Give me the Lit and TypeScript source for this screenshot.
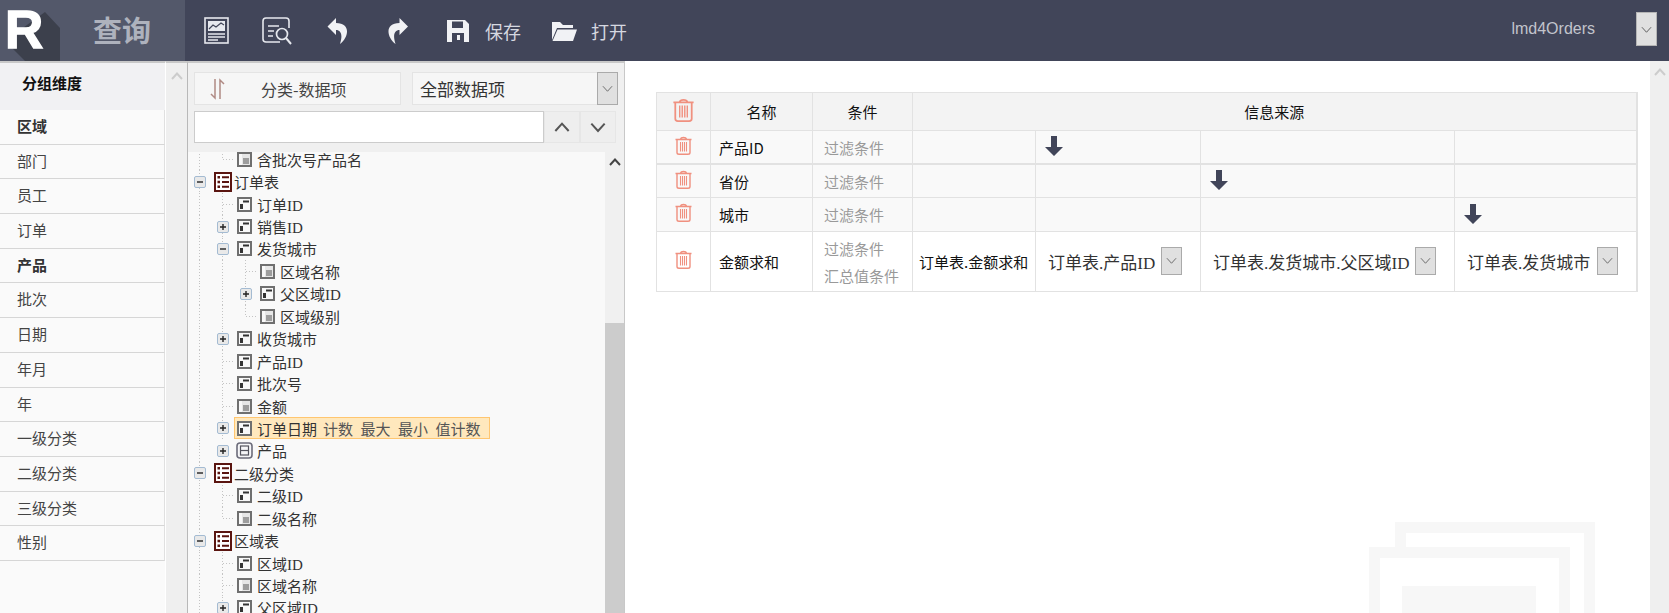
import { LitElement, css, html, svg } from 'lit';
import { customElement } from 'lit/decorators.js';

type TreeIcon = 'field' | 'measure' | 'table' | 'dim';
interface TreeRow {
  level: number;
  exp?: '+' | '-';
  end?: boolean;
  icon: TreeIcon;
  text: string;
  extras?: string[];
}

const GROUPS: [string, boolean][] = [
  ['区域', true], ['部门', false], ['员工', false], ['订单', false], ['产品', true], ['批次', false],
  ['日期', false], ['年月', false], ['年', false], ['一级分类', false], ['二级分类', false], ['三级分类', false], ['性别', false],
];

const TREE: TreeRow[] = [
  { level: 1, end: true, icon: 'measure', text: '含批次号产品名' },
  { level: 0, exp: '-', icon: 'table', text: '订单表' },
  { level: 1, icon: 'field', text: '订单ID' },
  { level: 1, exp: '+', icon: 'field', text: '销售ID' },
  { level: 1, exp: '-', icon: 'field', text: '发货城市' },
  { level: 2, icon: 'measure', text: '区域名称' },
  { level: 2, exp: '+', icon: 'field', text: '父区域ID' },
  { level: 2, end: true, icon: 'measure', text: '区域级别' },
  { level: 1, exp: '+', icon: 'field', text: '收货城市' },
  { level: 1, icon: 'field', text: '产品ID' },
  { level: 1, icon: 'field', text: '批次号' },
  { level: 1, icon: 'measure', text: '金额' },
  { level: 1, exp: '+', icon: 'field', text: '订单日期', extras: ['计数', '最大', '最小', '值计数'] },
  { level: 1, exp: '+', end: true, icon: 'dim', text: '产品' },
  { level: 0, exp: '-', icon: 'table', text: '二级分类' },
  { level: 1, icon: 'field', text: '二级ID' },
  { level: 1, end: true, icon: 'measure', text: '二级名称' },
  { level: 0, exp: '-', icon: 'table', text: '区域表' },
  { level: 1, icon: 'field', text: '区域ID' },
  { level: 1, icon: 'measure', text: '区域名称' },
  { level: 1, exp: '+', icon: 'field', text: '父区域ID' },
];

const chevron = (dir: 'up' | 'down', size: number, color: string, width = 1.5) => html`
  <svg width=${size} height=${size} viewBox="0 0 12 12">
    <path d=${dir === 'up' ? 'M1 9 L6 3.5 L11 9' : 'M1 3.5 L6 9 L11 3.5'} fill="none" stroke=${color} stroke-width=${width} />
  </svg>`;

const trash = (w: number, h: number) => html`
  <svg class="trash" width=${w} height=${h} viewBox="0 0 17 19">
    <g fill="none" stroke="#f0907f" stroke-width="1.4">
      <path d="M0.5 3.5 H16.5 M5.5 3 C6 1 11 1 11.5 3" />
      <path d="M2 4 V16.5 C2 17.6 2.8 18.3 4 18.3 H13 C14.2 18.3 15 17.6 15 16.5 V4" />
      <path d="M5.5 6 V15.5 M7.5 6 V15.5 M9.5 6 V15.5 M11.5 6 V15.5" stroke-width="1.1" />
    </g>
  </svg>`;

const downArrow = html`
  <svg class="down" width="18" height="20" viewBox="0 0 18 20">
    <path d="M6 0 H12 V11 H18 L9 20 L0 11 H6 Z" fill="#414559" />
  </svg>`;

const treeIcon = (kind: TreeIcon) => {
  if (kind === 'table') {
    return html`<svg class="ti-table" width="18" height="20" viewBox="0 0 18 20">
      <rect x="1" y="1" width="16" height="18" fill="#fff" stroke="#5a1510" stroke-width="2" />
      <path d="M3.5 4 H6 V6.5 H3.5 Z M3.5 8.8 H6 V11.3 H3.5 Z M3.5 13.6 H6 V16 H3.5 Z M8 4.2 H15 V6.2 H8 Z M8 9 H15 V11 H8 Z M8 13.8 H15 V15.8 H8 Z" fill="#5a1510" />
    </svg>`;
  }
  if (kind === 'dim') {
    return html`<svg class="ti-dim" width="17" height="17" viewBox="0 0 17 17">
      <rect x="1" y="1" width="15" height="15" rx="3" fill="#f6f6f8" stroke="#6c6c7a" stroke-width="1.6" />
      <rect x="4.5" y="4" width="8" height="9" fill="none" stroke="#55555f" stroke-width="1.2" />
      <path d="M4.5 8.5 H12.5" stroke="#55555f" stroke-width="1.2" />
    </svg>`;
  }
  const inner = kind === 'field'
    ? svg`<path d="M6 3.5 H12 V5.5 H6 Z M3 7 H6 V12 H3 Z" fill="#333" />`
    : svg`<rect x="5" y="2" width="8" height="11" fill="#e6e6e6" /><path d="M6 7 H12 M6 9 H12 M6 11 H12" stroke="#555" stroke-width="1" />`;
  return html`<svg class="ti" width="15" height="15" viewBox="0 0 15 15">
    <rect x="1" y="1" width="13" height="13" fill="#f8f8f8" stroke="#6f6f6f" stroke-width="2" />
    ${inner}
  </svg>`;
};

const expander = (sign: '+' | '-') => html`
  <svg class="exp" width="12" height="12" viewBox="0 0 12 12">
    <rect x="0.5" y="0.5" width="11" height="11" rx="1.5" fill="#e9e9e9" stroke="#a4bbd2" />
    <path d=${sign === '+' ? 'M3 6 H9 M6 3 V9' : 'M3 6 H9'} stroke="#222" stroke-width="1.4" />
  </svg>`;

const TOOL = '#e6e8ee';

@customElement('app-root')
export class AppRoot extends LitElement {
  static styles = css`
    :host {
      display: block;
      width: 1669px;
      height: 613px;
      overflow: hidden;
      background: #fff;
      font-family: "Noto Sans CJK SC", "Liberation Sans", sans-serif;
      font-size: 15px;
      color: #333;
    }
    svg { display: block; flex: none; }

    /* header */
    .top { display: flex; height: 61px; background: #414559; }
    .brand { display: flex; width: 185px; height: 61px; background: #53586a; }
    .brand .logo-text {
      font-family: "Liberation Sans", sans-serif;
      font-weight: 700;
      font-size: 53px;
      fill: #fff;
      stroke: #fff;
      stroke-width: 1.4px;
    }
    .brand .title {
      margin-left: 31px;
      line-height: 58px;
      font-size: 29px;
      font-weight: 700;
      color: #aeb2bd;
      white-space: nowrap;
    }
    .tools {
      display: grid;
      grid-template-columns: 58px 65px 59px 61px 104px auto;
      align-items: center;
      padding-left: 19px;
      flex: 1;
    }
    .tool { display: flex; align-items: center; color: #d6d8e0; font-size: 18px; }
    .tool span { white-space: nowrap; }
    .save span { margin-left: 16px; }
    .open span { margin-left: 14px; }
    .model {
      margin: 21px 41px 0 0;
      font: 16px/1 "Liberation Sans", sans-serif;
      color: #c2c4cc;
    }
    .model-btn {
      display: flex;
      align-items: center;
      justify-content: center;
      width: 21px;
      height: 34px;
      margin: 12px 12px 0 0;
      box-sizing: border-box;
      background: #e0e0e0;
      border: 1px solid #b5b5b5;
    }

    /* body */
    .body { display: flex; height: 552px; }

    .groups {
      width: 166px;
      flex: none;
      background: #fafafa;
      border-top: 2px solid #c8c8c8;
      border-right: 1px solid #fff;
      box-sizing: border-box;
    }
    .groups h2 {
      margin: 0;
      height: 47px;
      padding-left: 22px;
      line-height: 40px;
      font-size: 15px;
      font-weight: 700;
      color: #111;
      background: #f1f1f3;
    }
    .group {
      height: 34.7px;
      box-sizing: border-box;
      padding-left: 17px;
      line-height: 31px;
      border-bottom: 1px solid #d6d6d6;
      border-right: 1px solid #e0e0e0;
      color: #444;
    }
    .group.strong { font-weight: 700; color: #333; }

    .bar {
      display: flex;
      justify-content: center;
      flex: none;
      box-sizing: border-box;
      background: #efefef;
      padding-top: 7px;
    }
    .bar-left { width: 21px; border-top: 2px solid #c8c8c8; }
    .bar-main { width: 19px; padding-top: 5px; }

    .middle {
      display: flex;
      flex-direction: column;
      width: 438px;
      flex: none;
      box-sizing: border-box;
      background: #f0f0f0;
      border-top: 2px solid #c8c8c8;
      border-left: 1px solid #b8b8b8;
      border-right: 1px solid #c8c8c8;
    }
    .pick {
      display: flex;
      height: 33px;
      margin: 9px 6px 0 6px;
    }
    .sort {
      display: flex;
      align-items: center;
      width: 207px;
      box-sizing: border-box;
      padding-left: 15px;
      background: #f6f6f6;
      border: 1px solid #e4e4e4;
      color: #444;
      font-size: 16px;
    }
    .sort span { margin-left: 35px; }
    .scope {
      display: flex;
      align-items: center;
      justify-content: space-between;
      width: 206px;
      box-sizing: border-box;
      margin-left: 11px;
      padding-left: 7px;
      background: #f6f6f6;
      border: 1px solid #e4e4e4;
      border-right: 0;
      font-size: 17px;
      color: #333;
    }
    .drop {
      display: flex;
      align-items: center;
      justify-content: center;
      flex: none;
      box-sizing: border-box;
      background: #e0e0e0;
      border: 1px solid #aaa;
    }
    .scope .drop { width: 21px; height: 33px; }
    .search { display: flex; height: 32px; margin: 6px 6px 0 6px; }
    .search .box {
      width: 350px;
      box-sizing: border-box;
      background: #fff;
      border: 1px solid #ccc;
    }
    .search .nav {
      display: flex;
      align-items: center;
      justify-content: center;
      width: 36px;
      box-sizing: border-box;
      background: #eee;
      border: 1px solid #e6e6e6;
    }

    .tree-wrap { display: flex; flex: 1; min-height: 0; margin-top: 9px; }
    .tree {
      flex: 1;
      overflow: hidden;
      background: #f9f9f9;
      font-family: "Liberation Serif", "Noto Sans CJK SC", serif;
    }
    .tree-inner { margin-top: -4px; }
    .row { display: flex; align-items: center; height: 22.45px; white-space: nowrap; color: #333; }
    .cell { display: flex; align-items: center; justify-content: center; width: 23px; height: 100%; flex: none; }
    .cell.v { background: repeating-linear-gradient(to bottom, #c4c4c4 0 1px, transparent 1px 3px) center / 1px 100% no-repeat; }
    .cell.elbow {
      background:
        repeating-linear-gradient(to right, #c4c4c4 0 1px, transparent 1px 3px) right center / 50% 1px no-repeat,
        repeating-linear-gradient(to bottom, #c4c4c4 0 1px, transparent 1px 3px) center top / 1px 100% no-repeat;
    }
    .cell.elbow.end {
      background:
        repeating-linear-gradient(to right, #c4c4c4 0 1px, transparent 1px 3px) right center / 50% 1px no-repeat,
        repeating-linear-gradient(to bottom, #c4c4c4 0 1px, transparent 1px 3px) center top / 1px 50% no-repeat;
    }
    .node { display: flex; align-items: center; height: 100%; padding-left: 3px; }
    .node .label { margin-left: 5px; }
    .node.t0 .label { margin-left: 2px; }
    .node.t0 { font-family: "Noto Sans CJK SC", sans-serif; }
    .node.d0 { padding-left: 2px; }
    .node.d0 .label { margin-left: 4px; }
    .node.hit {
      height: 22px;
      width: 256px;
      box-sizing: border-box;
      padding-left: 2px;
      background: #ffe8bd;
      border: 1px solid #ffc670;
    }
    .node.hit .label { margin-left: 5px; }
    .extra { margin-left: 7.5px; color: #555; }
    .node.hit .label + .extra { margin-left: 6px; }
    .tree-bar {
      display: flex;
      flex-direction: column;
      width: 19px;
      flex: none;
      background: #f0f0f0;
    }
    .tree-bar .track { display: flex; justify-content: center; height: 171px; padding-top: 4px; box-sizing: border-box; }
    .tree-bar .thumb { flex: 1; background: #ccc; }

    /* right side */
    .main {
      position: relative;
      flex: 1;
      padding: 31px 0 0 31px;
      box-sizing: border-box;
      overflow: hidden;
      background: #fff;
    }
    .watermark { position: absolute; left: 744px; top: 461px; }
    table {
      position: relative;
      border-collapse: collapse;
      table-layout: fixed;
      width: 980px;
      color: #111;
      font-size: 15px;
    }
    th, td { border: 1px solid #e2e2e2; padding: 0; font-weight: 400; }
    thead th { height: 37px; background: #f3f3f3; text-align: center; color: #111; }
    tbody tr.plain td { background: #f9f9f9; }
    tbody tr.r1 td { height: 32px; border-bottom-width: 2px; }
    tbody tr.r2 td { height: 32px; }
    tbody tr.r3 td { height: 33px; }
    tbody tr.r4 td { height: 59px; }
    th:last-child, td:last-child { border-right-width: 2px; }
    .t-icon { display: flex; justify-content: center; padding-bottom: 4px; }
    .name { padding-left: 8px; }
    .cond { padding-left: 11px; color: #999; line-height: 27px; }
    .src { padding-left: 6px; white-space: nowrap; }
    .arrow { padding-left: 9px; }
    .arrow .down { margin-bottom: 2px; }
    .sel {
      display: flex;
      align-items: center;
      justify-content: space-between;
      padding: 0 18px 1px 12px;
      font: 17px "Liberation Serif", "Noto Sans CJK SC", serif;
      color: #333;
      white-space: nowrap;
    }
    .sel .drop { width: 21px; height: 28px; margin-top: -1px; }
  `;

  private renderTop() {
    return html`
      <div class="top">
        <div class="brand">
          <svg width="62" height="61" viewBox="0 0 62 61">
            <polygon points="8,44 25,61 60,61 60,28 45,12 20,30" fill="#3c404c" />
            <text class="logo-text" x="5" y="48">R</text>
          </svg>
          <div class="title">查询</div>
        </div>
        <div class="tools">
          <div class="tool">
            <svg width="25" height="27" viewBox="0 0 25 27">
              <rect x="1" y="1" width="23" height="25" fill="none" stroke=${TOOL} stroke-width="1.6" />
              <rect x="4" y="4" width="17" height="10" fill=${TOOL} />
              <path d="M5 12 L9 8 L12 10 L17 6 L20 8" fill="none" stroke="#414559" stroke-width="1.2" />
              <path d="M4 17 H21 M4 20 H21 M4 23 H14" stroke=${TOOL} stroke-width="1.4" />
            </svg>
          </div>
          <div class="tool">
            <svg width="30" height="28" viewBox="0 0 30 28">
              <path d="M18 25 H4 C2.5 25 1 24 1 22 V4 C1 2 2.5 1 4 1 H24 C26 1 27 2 27 4 V11" fill="none" stroke=${TOOL} stroke-width="1.6" />
              <path d="M6 9 H17 M6 14 H12 M6 19 H11" stroke=${TOOL} stroke-width="1.6" />
              <circle cx="20" cy="17" r="5.5" fill="none" stroke=${TOOL} stroke-width="1.7" />
              <path d="M24 21 L29 27" stroke=${TOOL} stroke-width="2" />
            </svg>
          </div>
          <div class="tool">
            <svg width="22" height="27" viewBox="0 0 22 27">
              <path d="M9 1 L0.5 9.5 L9 18 V13 C14 13 16 18 13 27 C22 20 24 6 9 6 Z" fill="#f1f2f5" />
            </svg>
          </div>
          <div class="tool">
            <svg width="23" height="27" viewBox="0 0 22 27">
              <path d="M13 1 L21.5 9.5 L13 18 V13 C8 13 6 18 9 27 C0 20 -2 6 13 6 Z" fill="#f1f2f5" />
            </svg>
          </div>
          <div class="tool save">
            <svg width="22" height="22" viewBox="0 0 22 22">
              <path d="M0 0 H18 L22 4 V22 H0 Z" fill="#f1f2f5" />
              <rect x="5" y="1.5" width="11" height="6.5" fill="#414559" />
              <rect x="5" y="13" width="12" height="9" fill="#414559" />
              <rect x="10" y="15" width="3" height="5" fill="#f1f2f5" />
            </svg>
            <span>保存</span>
          </div>
          <div class="tool open">
            <svg width="26" height="22" viewBox="0 0 26 22">
              <path d="M1 20 V2 H9 L12 5 H22 V8 H6 Z" fill="#f1f2f5" />
              <path d="M6.5 9.5 H26 L22 21 H1.5 Z" fill="#f1f2f5" />
            </svg>
            <span>打开</span>
          </div>
        </div>
        <div class="model">lmd4Orders</div>
        <div class="model-btn">${chevron('down', 11, '#555', 1)}</div>
      </div>`;
  }

  private renderRow(r: TreeRow) {
    const guides = [];
    for (let i = 0; i < r.level; i++) guides.push(html`<div class="cell v"></div>`);
    const own = r.exp
      ? html`<div class=${r.level === 0 || !r.end ? 'cell v' : 'cell'}>${expander(r.exp)}</div>`
      : html`<div class=${r.end ? 'cell elbow end' : 'cell elbow'}></div>`;
    const nodeClass = `node ${r.level === 0 ? 't0' : ''} ${r.icon === 'dim' ? 'd0' : ''} ${r.extras ? 'hit' : ''}`;
    return html`
      <div class="row">
        ${guides}${own}
        <div class=${nodeClass}>
          ${treeIcon(r.icon)}
          <span class="label">${r.text}</span>
          ${(r.extras ?? []).map((e) => html`<span class="extra">${e}</span>`)}
        </div>
      </div>`;
  }

  private renderMiddle() {
    return html`
      <div class="middle">
        <div class="pick">
          <div class="sort">
            <svg width="16" height="22" viewBox="0 0 16 22">
              <path d="M5 1 V20 L1 16 M10 21 V2 L14 6" fill="none" stroke="#b08a84" stroke-width="1.5" />
            </svg>
            <span>分类-数据项</span>
          </div>
          <div class="scope">
            全部数据项
            <div class="drop">${chevron('down', 11, '#666', 1)}</div>
          </div>
        </div>
        <div class="search">
          <div class="box"></div>
          <div class="nav">${chevron('up', 16, '#555')}</div>
          <div class="nav">${chevron('down', 16, '#555')}</div>
        </div>
        <div class="tree-wrap">
          <div class="tree">
            <div class="tree-inner">${TREE.map((r) => this.renderRow(r))}</div>
          </div>
          <div class="tree-bar">
            <div class="track">${chevron('up', 12, '#444', 2)}</div>
            <div class="thumb"></div>
          </div>
        </div>
      </div>`;
  }

  private renderTable() {
    return html`
      <table>
        <colgroup>
          <col style="width:54px" /><col style="width:102px" /><col style="width:100px" />
          <col style="width:123px" /><col style="width:165px" /><col style="width:254px" /><col style="width:182px" />
        </colgroup>
        <thead>
          <tr>
            <th><div class="t-icon">${trash(23, 24)}</div></th>
            <th>名称</th>
            <th>条件</th>
            <th colspan="4">信息来源</th>
          </tr>
        </thead>
        <tbody>
          <tr class="plain r1">
            <td><div class="t-icon">${trash(17, 19)}</div></td>
            <td class="name">产品ID</td>
            <td class="cond">过滤条件</td>
            <td></td>
            <td class="arrow">${downArrow}</td>
            <td></td>
            <td></td>
          </tr>
          <tr class="plain r2">
            <td><div class="t-icon">${trash(17, 19)}</div></td>
            <td class="name">省份</td>
            <td class="cond">过滤条件</td>
            <td></td>
            <td></td>
            <td class="arrow">${downArrow}</td>
            <td></td>
          </tr>
          <tr class="plain r3">
            <td><div class="t-icon">${trash(17, 19)}</div></td>
            <td class="name">城市</td>
            <td class="cond">过滤条件</td>
            <td></td>
            <td></td>
            <td></td>
            <td class="arrow">${downArrow}</td>
          </tr>
          <tr class="r4">
            <td><div class="t-icon">${trash(17, 19)}</div></td>
            <td class="name">金额求和</td>
            <td class="cond">过滤条件<br />汇总值条件</td>
            <td class="src">订单表.金额求和</td>
            <td>${this.renderSel('订单表.产品ID')}</td>
            <td>${this.renderSel('订单表.发货城市.父区域ID')}</td>
            <td>${this.renderSel('订单表.发货城市')}</td>
          </tr>
        </tbody>
      </table>`;
  }

  private renderSel(text: string) {
    return html`<div class="sel"><span>${text}</span><div class="drop">${chevron('down', 11, '#666', 1)}</div></div>`;
  }

  render() {
    return html`
      ${this.renderTop()}
      <div class="body">
        <div class="groups">
          <h2>分组维度</h2>
          ${GROUPS.map(([name, strong]) => html`<div class=${strong ? 'group strong' : 'group'}>${name}</div>`)}
        </div>
        <div class="bar bar-left">${chevron('up', 12, '#ccc', 2)}</div>
        ${this.renderMiddle()}
        <div class="main">
          <svg class="watermark" width="226" height="91" viewBox="0 0 226 91">
            <g fill="none" stroke="#f7f7f7" stroke-width="11">
              <path d="M31.5 30 V5.5 H220.5 V91" />
              <path d="M5.5 91 V30.5 H195.5 V91" />
            </g>
            <rect x="33" y="64" width="134" height="27" fill="#f7f7f7" />
          </svg>
          ${this.renderTable()}
        </div>
        <div class="bar bar-main">${chevron('up', 12, '#ccc', 2)}</div>
      </div>`;
  }
}
